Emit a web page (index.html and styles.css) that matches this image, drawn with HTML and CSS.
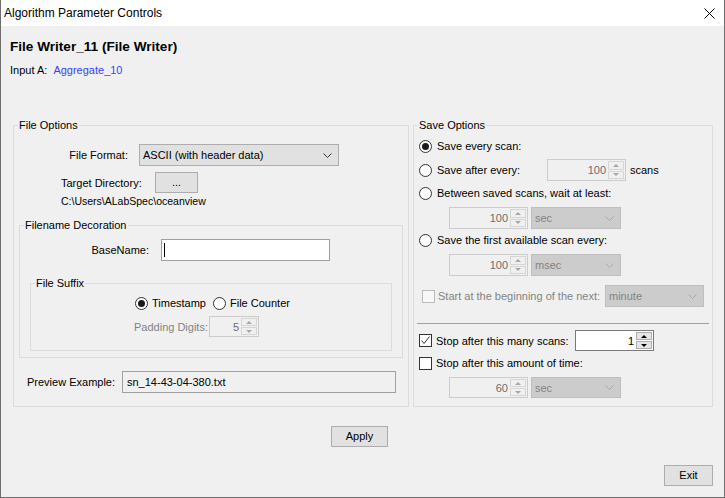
FILE: index.html
```html
<!DOCTYPE html>
<html>
<head>
<meta charset="utf-8">
<link rel="stylesheet" href="styles.css">
</head>
<body>
<div class="window">
  <div class="titlebar">
    <span class="title">Algorithm Parameter Controls</span>
    <svg class="close" width="11" height="11" viewBox="0 0 11 11"><path d="M0.5 0.5 L10.5 10.5 M10.5 0.5 L0.5 10.5" stroke="#000" stroke-width="1" fill="none"/></svg>
  </div>
  <div class="content">
    <div class="header">
      <div class="heading">File Writer_11 (File Writer)</div>
      <div class="input-line">Input A: <span class="link">Aggregate_10</span></div>
    </div>
    <div class="groups">
      <div class="group file-options">
        <div class="legend">File Options</div>
        <div class="format-row">
          <span class="lbl-format">File Format:</span>
          <div class="combo combo-format"><span>ASCII (with header data)</span><svg width="9" height="5" viewBox="0 0 9 5"><path d="M0.5 0.5 L4.5 4.5 L8.5 0.5" stroke="#333" fill="none"/></svg></div>
        </div>
        <div class="dir-row">
          <span class="lbl-dir">Target Directory:</span>
          <button class="btn btn-dots">...</button>
        </div>
        <div class="path">C:\Users\ALabSpec\oceanview</div>
        <div class="group decoration">
          <div class="legend">Filename Decoration</div>
          <div class="base-row">
            <span class="lbl-base">BaseName:</span>
            <div class="textbox"><span class="caret"></span></div>
          </div>
          <div class="group suffix">
            <div class="legend">File Suffix</div>
            <div class="radios-row">
              <div class="opt suffix-opt1"><span class="radio checked"></span><span>Timestamp</span></div>
              <div class="opt"><span class="radio"></span><span>File Counter</span></div>
            </div>
            <div class="pad-row">
              <span class="lbl-pad disabled">Padding Digits:</span>
              <div class="spin spin-pad"><span class="val">5</span><span class="arrows"><span class="up"></span><span class="down"></span></span></div>
            </div>
          </div>
        </div>
        <div class="preview-row">
          <span class="lbl-preview">Preview Example:</span>
          <div class="readonly">sn_14-43-04-380.txt</div>
        </div>
      </div>
      <div class="group save-options">
        <div class="legend">Save Options</div>
        <div class="r-row row1"><span class="radio checked"></span><span class="rtext">Save every scan:</span></div>
        <div class="r-row row2">
          <div class="opt-after"><span class="radio"></span><span class="rtext">Save after every:</span></div>
          <div class="spin spin-w"><span class="val">100</span><span class="arrows"><span class="up"></span><span class="down"></span></span></div>
          <span class="unit">scans</span>
        </div>
        <div class="r-row row3"><span class="radio"></span><span class="rtext">Between saved scans, wait at least:</span></div>
        <div class="sub-row sr1">
          <div class="spin spin-w"><span class="val">100</span><span class="arrows"><span class="up"></span><span class="down"></span></span></div>
          <div class="combo combo-dis combo-unit"><span>sec</span><svg width="9" height="5" viewBox="0 0 9 5"><path d="M0.5 0.5 L4.5 4.5 L8.5 0.5" stroke="#a8a8a8" fill="none"/></svg></div>
        </div>
        <div class="r-row row4"><span class="radio"></span><span class="rtext">Save the first available scan every:</span></div>
        <div class="sub-row sr2">
          <div class="spin spin-w"><span class="val">100</span><span class="arrows"><span class="up"></span><span class="down"></span></span></div>
          <div class="combo combo-dis combo-unit"><span>msec</span><svg width="9" height="5" viewBox="0 0 9 5"><path d="M0.5 0.5 L4.5 4.5 L8.5 0.5" stroke="#a8a8a8" fill="none"/></svg></div>
        </div>
        <div class="chk-row">
          <span class="check dis"></span>
          <span class="chk-lbl disabled">Start at the beginning of the next:</span>
          <div class="combo combo-dis combo-minute"><span>minute</span><svg width="9" height="5" viewBox="0 0 9 5"><path d="M0.5 0.5 L4.5 4.5 L8.5 0.5" stroke="#a8a8a8" fill="none"/></svg></div>
        </div>
        <div class="separator"></div>
        <div class="chk2-row">
          <span class="check"><svg width="11" height="11" viewBox="0 0 11 11"><path d="M1.5 5.5 L4 8.5 L9.5 1.5" stroke="#333" stroke-width="1" fill="none"/></svg></span>
          <span class="chk2-lbl">Stop after this many scans:</span>
          <div class="spin spin-w spin-en"><span class="val">1</span><span class="arrows"><span class="up"></span><span class="down"></span></span></div>
        </div>
        <div class="chk3-row">
          <span class="check"></span>
          <span class="chk3-lbl">Stop after this amount of time:</span>
        </div>
        <div class="sub-row sr3">
          <div class="spin spin-w spin-h21"><span class="val">60</span><span class="arrows"><span class="up"></span><span class="down"></span></span></div>
          <div class="combo combo-dis combo-unit combo-h21"><span>sec</span><svg width="9" height="5" viewBox="0 0 9 5"><path d="M0.5 0.5 L4.5 4.5 L8.5 0.5" stroke="#a8a8a8" fill="none"/></svg></div>
        </div>
      </div>
    </div>
    <div class="apply-row"><button class="btn btn-apply">Apply</button></div>
    <div class="exit-row"><button class="btn btn-exit">Exit</button></div>
  </div>
</div>
</body>
</html>
```

FILE: styles.css
```css
* { box-sizing: border-box; }
html, body { margin: 0; padding: 0; }
body {
  font-family: "Liberation Sans", Arial, sans-serif;
  font-size: 11px;
  color: #000;
  background: #f0f0f0;
}
.window {
  width: 725px;
  height: 498px;
  border: 1px solid #6e6e6e;
  border-top: none;
  background: #f0f0f0;
  display: flex;
  flex-direction: column;
}
.titlebar {
  height: 26px;
  flex: none;
  background: #fff;
  display: flex;
  align-items: center;
  justify-content: space-between;
  padding: 0 9px 0 3px;
}
.title { font-size: 12px; line-height: 16px; }
.close { display: block; }
.content { display: flex; flex-direction: column; }
.header { padding: 13px 0 0 9px; }
.heading { font-size: 13.6px; font-weight: bold; line-height: 16px; }
.input-line { margin-top: 8px; line-height: 14px; }
.link { color: #4040ff; margin-left: 3px; }
.disabled { color: #838383; }

.groups {
  display: flex;
  gap: 4px;
  margin: 48px 11px 0 12px;
  height: 282px;
}
.group { border: 1px solid #dcdcdc; }
.file-options { width: 396px; }
.save-options { width: 300px; }
.legend {
  margin: -8px 0 0 4px;
  padding: 0 1px;
  line-height: 14px;
  background: #f0f0f0;
  width: max-content;
}

.btn {
  font: inherit;
  color: #000;
  background: #e1e1e1;
  border: 1px solid #adadad;
  padding: 0;
  margin: 0;
  height: 21px;
  line-height: 19px;
  text-align: center;
}

.combo {
  display: flex;
  align-items: center;
  justify-content: space-between;
  padding: 0 6px 0 3px;
  border: 1px solid #adadad;
  background: #e1e1e1;
  height: 22px;
}
.combo svg { display: block; flex: none; }
.combo-dis { background: #cccccc; border-color: #bfbfbf; color: #838383; }

.format-row { display: flex; align-items: center; margin-top: 12px; }
.lbl-format { width: 114px; text-align: right; }
.combo-format { margin-left: 11px; width: 200px; }

.dir-row { display: flex; align-items: center; margin-top: 6px; padding-left: 47px; }
.lbl-dir { width: 94px; }
.btn-dots { width: 43px; }

.path { margin-top: 1px; padding-left: 47px; line-height: 14px; font-size: 10.5px; }

.decoration { margin: 17px 5px 0 5px; height: 133px; }
.base-row { display: flex; align-items: center; margin-top: 7px; }
.lbl-base { width: 129px; text-align: right; }
.textbox {
  margin-left: 12px;
  width: 169px;
  height: 22px;
  background: #fff;
  border: 1px solid #a0a0a0;
  display: flex;
  align-items: center;
  padding-left: 2px;
}
.caret { width: 1px; height: 14px; background: #000; }

.suffix { margin: 22px 10px 0 10px; height: 68px; }
.radios-row { display: flex; align-items: center; margin-top: 5px; padding-left: 104px; height: 16px; }
.opt { display: flex; align-items: center; gap: 4px; }
.suffix-opt1 { width: 78px; }
.pad-row { display: flex; align-items: center; margin-top: 5px; padding-left: 103px; }
.lbl-pad { width: 75px; }

.radio {
  width: 13px;
  height: 13px;
  flex: none;
  border: 1px solid #333;
  border-radius: 50%;
  background: #fff;
  display: flex;
  align-items: center;
  justify-content: center;
}
.radio.checked::after {
  content: "";
  width: 7px;
  height: 7px;
  border-radius: 50%;
  background: #1a1a1a;
}
.check {
  width: 13px;
  height: 13px;
  flex: none;
  border: 1px solid #333;
  background: #fff;
  display: flex;
  align-items: center;
  justify-content: center;
}
.check svg { display: block; }
.check.dis { border-color: #bcbcbc; background: #f7f7f7; }

.spin {
  display: flex;
  border: 1px solid #cccccc;
  background: #f0f0f0;
  color: #6d6d6d;
  height: 22px;
}
.spin .val { flex: 1; padding-right: 2px; display: flex; align-items: center; justify-content: flex-end; }
.spin .arrows {
  width: 17px;
  flex: none;
  display: flex;
  flex-direction: column;
  padding: 1px 1px 1px 0;
  gap: 1px;
}
.spin .arrows span {
  flex: 1;
  border: 1px solid #d6d6d6;
  background: #f0f0f0;
  display: flex;
  align-items: center;
  justify-content: center;
}
.spin .arrows .up::before {
  content: "";
  border-left: 3px solid transparent;
  border-right: 3px solid transparent;
  border-bottom: 3px solid #a6a6a6;
}
.spin .arrows .down::before {
  content: "";
  border-left: 3px solid transparent;
  border-right: 3px solid transparent;
  border-top: 3px solid #a6a6a6;
}
.spin-en { background: #fff; border-color: #7a7a7a; color: #000; height: 21px; }
.spin-en .arrows span { background: #e5e5e5; border-color: #adadad; }
.spin-en .arrows .up::before { border-bottom-color: #000; }
.spin-en .arrows .down::before { border-top-color: #000; }
.spin-pad { width: 50px; height: 21px; }
.spin-w { width: 79px; }
.spin-h21 { height: 21px; }
.combo-h21 { height: 21px; }

.preview-row { display: flex; align-items: center; margin-top: 13px; margin-left: 13px; }
.lbl-preview { width: 95px; }
.readonly {
  width: 274px;
  height: 22px;
  border: 1px solid #a0a0a0;
  background: #f0f0f0;
  display: flex;
  align-items: center;
  padding-left: 4px;
}

.r-row { display: flex; align-items: center; padding-left: 5px; height: 16px; }
.rtext { margin-left: 5px; }
.row1 { margin-top: 6px; }
.row2 { margin-top: 5px; height: 22px; }
.opt-after { display: flex; align-items: center; width: 128px; }
.unit { margin-left: 4px; }
.row3 { margin-top: 4px; }
.row4 { margin-top: 3px; }
.sub-row { display: flex; align-items: center; padding-left: 35px; gap: 3px; }
.sr1, .sr2, .sr3 { margin-top: 6px; }
.combo-unit { width: 90px; }

.chk-row { display: flex; align-items: center; margin-top: 9px; padding-left: 8px; }
.chk-lbl { margin-left: 3px; width: 167px; }
.combo-minute { width: 99px; }

.separator { margin: 16px 3px 0 3px; height: 1px; background: #a0a0a0; }

.chk2-row { display: flex; align-items: center; margin-top: 6px; padding-left: 5px; }
.chk2-lbl { margin-left: 4px; width: 139px; }
.chk3-row { display: flex; align-items: center; margin-top: 4px; padding-left: 5px; height: 16px; }
.chk3-lbl { margin-left: 4px; }

.apply-row { margin-top: 19px; padding-left: 330px; display: flex; }
.btn-apply { width: 57px; }
.exit-row { margin-top: 18px; display: flex; justify-content: flex-end; padding-right: 11px; }
.btn-exit { width: 49px; }
```
